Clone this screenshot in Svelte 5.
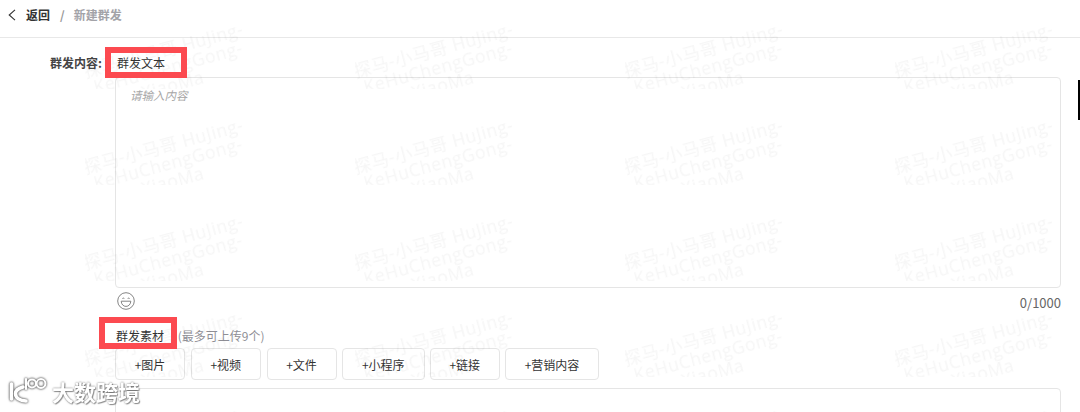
<script>
  const tiles = Array.from({ length: 25 }, (_, i) => i);
  const buttons = ['图片', '视频', '文件', '小程序', '链接', '营销内容'];
</script>

<div class="page">
  <header class="top">
    <svg class="back" width="8" height="12" viewBox="0 0 8 12"><path d="M7 0.8 L1.2 6 L7 11.200" fill="none" stroke="#333" stroke-width="1.100"/></svg>
    <span class="ret">返回</span>
    <span class="sep">/</span>
    <span class="crumb">新建群发</span>
  </header>

  <main class="form">
    <div class="row">
      <span class="label">群发内容:</span>
      <span class="tab">群发文本</span>
    </div>
    <div class="area"><span class="ph">请输入内容</span></div>
    <div class="tools">
      <svg class="emoji" width="18" height="18" viewBox="0 0 18 18" fill="none" stroke="#777" stroke-width="0.900">
        <circle cx="9" cy="9" r="8.300"/>
        <path d="M4.200 9.200 H13.800 C13.600 12.400 11.600 14.400 9 14.400 C6.400 14.400 4.400 12.400 4.200 9.200 Z"/>
        <path d="M5.400 6.800 C5.800 5.800 6.900 5.800 7.300 6.800 M10.700 6.800 C11.100 5.800 12.200 5.800 12.600 6.800"/>
      </svg>
      <span class="count">0/1000</span>
    </div>
    <div class="mat">
      <span class="mat-title">群发素材</span>
      <span class="hint">(最多可上传9个)</span>
    </div>
    <div class="btns">
      {#each buttons as b}
        <button class="btn">+{b}</button>
      {/each}
    </div>
    <div class="next"></div>
  </main>

  <div class="marks" aria-hidden="true">
    {#each tiles as t (t)}
      <div class="tile">
        <div class="mark">探马-小马哥 HuJing-<br />KeHuChengGong-<br />XiaoMa</div>
      </div>
    {/each}
  </div>

  <div class="box box1"></div>
  <div class="box box2"></div>
  <div class="scroll"></div>

  <div class="logo">
    <svg class="logo-icon" width="42" height="30" viewBox="0 0 42 30" fill="none" stroke="#fff" stroke-linecap="round">
      <path d="M3.500 8 V23" stroke-width="3.500"/>
      <path d="M15 11 C10 12.500 7.500 15 7.500 17.500 C7.500 22 12 25 18 25" stroke-width="3.500"/>
      <path d="M18 3 V13" stroke-width="2.200"/>
      <circle cx="24" cy="7.500" r="4" stroke-width="2"/>
      <circle cx="33" cy="7.500" r="4.400" stroke-width="2"/>
    </svg>
    <span class="logo-text">大数跨境</span>
  </div>
</div>

<style>
  :global(body) { margin: 0; background: #fff; }
  .page {
    position: relative;
    width: 1080px;
    height: 412px;
    overflow: hidden;
    background: #fff;
    font-family: "Noto Sans CJK SC", "Noto Sans", sans-serif;
    font-size: 12px;
    color: #333;
  }
  .top {
    box-sizing: border-box;
    height: 38px;
    padding: 0 0 8px 8px;
    display: flex;
    align-items: center;
    border-bottom: 1px solid #e8e8e8;
  }
  .back { margin-right: 10px; }
  .ret { font-weight: 700; color: #333; }
  .sep { margin: 0 9px 0 10px; color: #999; font-weight: 700; }
  .crumb { color: #a3a3a8; font-weight: 700; }
  .form { padding: 9px 19px 0 115px; }
  .row { height: 30px; display: flex; align-items: center; margin-left: -65px; }
  .label {
    width: 67px;
    white-space: nowrap;
    font-weight: 700;
    color: #444;
  }
  .tab { color: #333; }
  .area {
    box-sizing: border-box;
    height: 211px;
    border: 1px solid #e5e5e5;
    border-radius: 4px;
    padding: 8px 14px;
  }
  .ph { color: #a6a6a6; font-style: italic; font-size: 11.500px; }
  .tools {
    display: flex;
    justify-content: space-between;
    align-items: flex-start;
    height: 24px;
    padding: 4px 0 0 1.500px;
    box-sizing: border-box;
  }
  .count { color: #666; font-size: 13px; line-height: 18px; margin-top: 2px; }
  .mat { height: 25px; padding-top: 14px; line-height: 20px; white-space: nowrap; }
  .mat-title { margin-left: 1px; color: #333; }
  .hint { color: #8f8f96; margin-left: 11px; }
  .btns { display: flex; gap: 5.500px; margin-top: -3px; position: relative; }
  .btn {
    box-sizing: border-box;
    height: 32px;
    padding: 0;
    border: 1px solid #e5e5e5;
    border-radius: 4px;
    background: #fff;
    font: inherit;
    color: #333;
    width: 70px;
  }
  .btn:nth-child(2) { width: 70.500px; }
  .btn:nth-child(3) { width: 70px; }
  .btn:nth-child(4) { width: 82.500px; }
  .btn:nth-child(5) { width: 69.500px; }
  .btn:nth-child(6) { width: 94px; }
  .next {
    height: 60px;
    margin-top: 8px;
    border: 1px solid #e5e5e5;
    border-radius: 4px;
  }
  .marks {
    position: absolute;
    left: 85px;
    top: 24px;
    width: 1350px;
    display: grid;
    grid-template-columns: repeat(5, 270px);
    grid-auto-rows: 96px;
    pointer-events: none;
    mix-blend-mode: multiply;
  }
  .tile { overflow: hidden; height: 65px; width: 175px; }
  .mark {
    width: 166px;
    margin-top: 16px;
    font-size: 17.500px;
    letter-spacing: 0.6px;
    line-height: 18px;
    text-align: center;
    white-space: nowrap;
    color: #f6f6f6;
    font-family: "Open Sans", "Noto Sans CJK SC", sans-serif;
    transform: rotate(-15deg);
    transform-origin: center;
    will-change: transform;
  }
  .box {
    position: absolute;
    box-sizing: border-box;
    border: 6px solid #fc4a50;
  }
  .box1 { left: 105px; top: 47px; width: 82px; height: 31px; }
  .box2 { left: 99px; top: 317px; width: 78px; height: 32px; }
  .scroll {
    position: absolute;
    right: 0;
    top: 80px;
    width: 2px;
    height: 40px;
    background: #000;
  }
  .logo {
    position: absolute;
    left: 8px;
    top: 376px;
    display: flex;
    align-items: center;
    gap: 2px;
    height: 30px;
  }
  .logo-icon { filter: drop-shadow(0 0 1px rgba(0, 0, 0, 0.7)) drop-shadow(0 0 1px rgba(0, 0, 0, 0.3)); }
  .logo-text {
    color: #fff;
    font-size: 22px;
    font-weight: 700;
    line-height: 30px;
    text-shadow: 0 0 2px rgba(0, 0, 0, 0.6), 1px 1px 1px rgba(0, 0, 0, 0.35);
  }
</style>
